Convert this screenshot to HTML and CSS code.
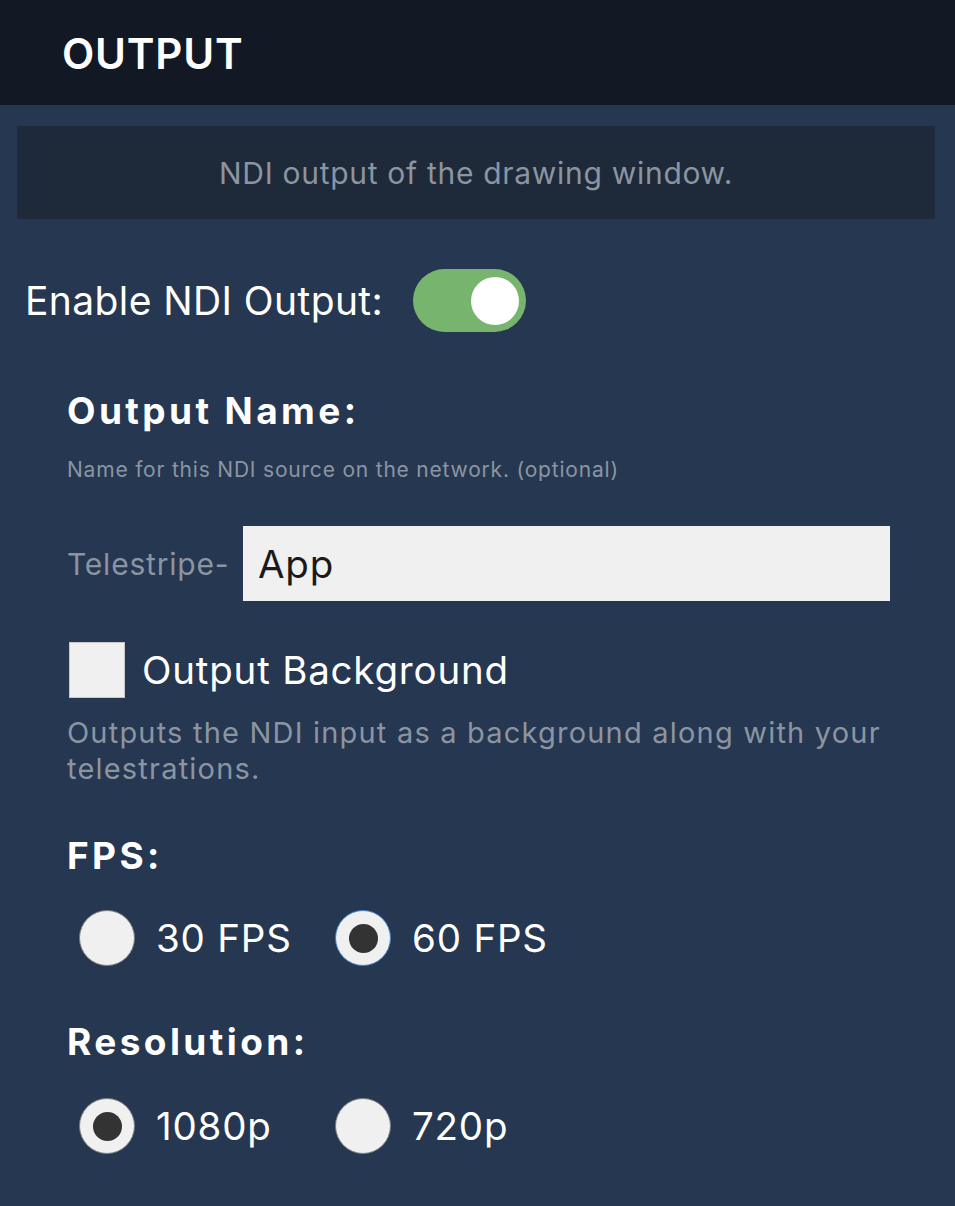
FILE: index.html
```html
<!DOCTYPE html>
<html>
<head>
<meta charset="utf-8">
<link rel="stylesheet" href="styles.css">
</head>
<body>
<div class="page">
  <header class="topbar"><h1 class="title">OUTPUT</h1></header>
  <div class="desc-box">NDI output of the drawing window.</div>
  <div class="enable-row">
    <span class="enable-label">Enable NDI Output:</span>
    <span class="toggle"><span class="knob"></span></span>
  </div>
  <section class="settings">
    <h2 class="heading heading-name">Output Name:</h2>
    <p class="hint">Name for this NDI source on the network. (optional)</p>
    <div class="name-row">
      <span class="prefix">Telestripe-</span>
      <div class="text-input">App</div>
    </div>
    <div class="check-row">
      <span class="checkbox"></span>
      <span class="check-label">Output Background</span>
    </div>
    <p class="check-desc">Outputs the NDI input as a background along with your telestrations.</p>
    <h2 class="heading heading-fps">FPS:</h2>
    <div class="radio-group">
      <div class="radio-item"><span class="radio"></span><span class="radio-label">30 FPS</span></div>
      <div class="radio-item"><span class="radio checked focused"></span><span class="radio-label">60 FPS</span></div>
    </div>
    <h2 class="heading heading-res">Resolution:</h2>
    <div class="radio-group">
      <div class="radio-item"><span class="radio checked"></span><span class="radio-label">1080p</span></div>
      <div class="radio-item"><span class="radio"></span><span class="radio-label">720p</span></div>
    </div>
  </section>
</div>
</body>
</html>
```
FILE: styles.css
```css
html, body {
  margin: 0;
  padding: 0;
  background: #263751;
}
body {
  font-family: Inter, "Noto Sans", sans-serif;
  color: #ffffff;
}
.page {
  width: 955px;
  height: 1206px;
  overflow: hidden;
  background: #263751;
}
.topbar {
  height: 105px;
  background: #131924;
  display: flex;
  align-items: center;
  padding-left: 62px;
  box-sizing: border-box;
}
.title {
  margin: 0;
  font-size: 42px;
  font-weight: 600;
  letter-spacing: 0.8px;
  line-height: 1;
  color: #ffffff;
  padding-top: 2px;
}
.desc-box {
  margin: 21px 20px 0 17px;
  height: 93px;
  background: #1e293a;
  display: flex;
  align-items: center;
  justify-content: center;
  color: #8b95a1;
  font-size: 30px;
  letter-spacing: 0.7px;
}
.enable-row {
  display: flex;
  align-items: center;
  margin-top: 50px;
  padding-left: 25px;
  height: 63px;
}
.enable-label {
  font-size: 39px;
  letter-spacing: 0.4px;
  line-height: 1;
  margin-right: 30px;
}
.toggle {
  width: 113px;
  height: 63px;
  border-radius: 32px;
  background: #77b56f;
  display: flex;
  align-items: center;
  justify-content: flex-end;
  padding-right: 7px;
  box-sizing: border-box;
}
.knob {
  width: 48px;
  height: 48px;
  border-radius: 50%;
  background: #ffffff;
}
.settings {
  padding-left: 67px;
  padding-right: 60px;
}
.heading {
  margin: 0;
  font-size: 37px;
  font-weight: 700;
  line-height: 40px;
  letter-spacing: 3.4px;
}
.heading-name { margin-top: 59px; }
.heading-fps { margin-top: 49px; }
.heading-res { margin-top: 56px; }
.hint {
  margin: 27px 0 0;
  font-size: 21px;
  letter-spacing: 0.8px;
  line-height: 24px;
  color: #8b95a1;
}
.name-row {
  margin-top: 44px;
  display: flex;
  align-items: center;
  height: 75px;
}
.prefix {
  width: 176px;
  font-size: 30px;
  letter-spacing: 0.8px;
  color: #8b95a1;
}
.text-input {
  width: 647px;
  height: 75px;
  background: #f0f0f0;
  color: #1a1a1a;
  font-size: 38.5px;
  letter-spacing: 0.8px;
  display: flex;
  align-items: center;
  padding-left: 15px;
  box-sizing: border-box;
}
.check-row {
  margin-top: 41px;
  display: flex;
  align-items: center;
  padding-left: 2px;
  height: 56px;
}
.checkbox {
  width: 56px;
  height: 56px;
  background: #f0f0f0;
  box-sizing: border-box;
  border: 1px solid #c8c8c8;
  margin-right: 17px;
}
.check-label {
  font-size: 38.5px;
  letter-spacing: 0.8px;
}
.check-desc {
  margin: 17px 0 0;
  font-size: 29px;
  letter-spacing: 1.2px;
  line-height: 36px;
  color: #8b95a1;
}
.radio-group {
  display: grid;
  grid-template-columns: 256px 256px;
  padding-left: 12px;
  margin-top: 34px;
}
.heading-res + .radio-group { margin-top: 36px; }
.radio-item {
  display: flex;
  align-items: center;
  height: 56px;
}
.radio {
  width: 56px;
  height: 56px;
  border-radius: 50%;
  background: #f0f0f0;
  border: 1px solid #7a7a7a;
  box-sizing: border-box;
  display: flex;
  align-items: center;
  justify-content: center;
  margin-right: 21px;
}
.radio.checked::after {
  content: "";
  width: 29px;
  height: 29px;
  border-radius: 50%;
  background: #333333;
}
.radio.focused {
  border: 1px solid #3d7fc4;
}
.radio-label {
  font-size: 38.5px;
  letter-spacing: 0.8px;
}
```
